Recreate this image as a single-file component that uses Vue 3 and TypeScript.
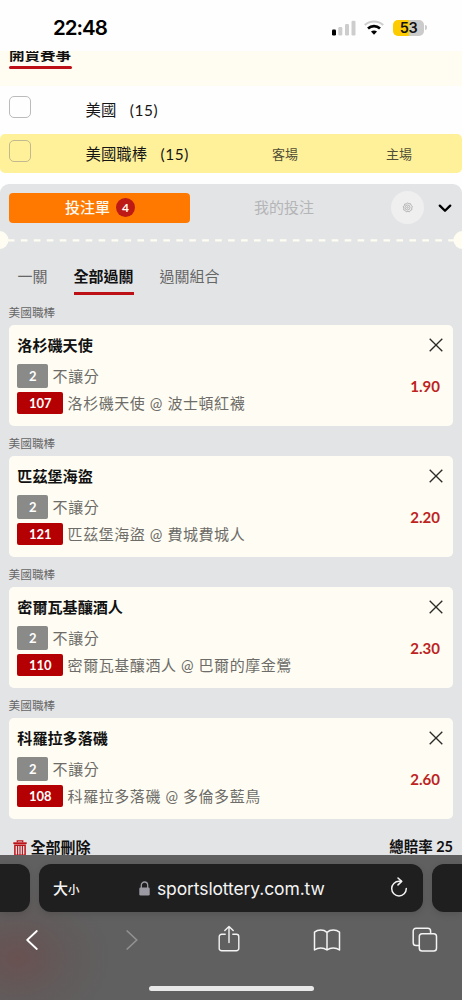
<script setup lang="ts">
interface Bet {
  id: string
  pick: string
  match: string
  odds: string
}

const bets: Bet[] = [
  { id: '107', pick: '洛杉磯天使', match: '洛杉磯天使 @ 波士頓紅襪', odds: '1.90' },
  { id: '121', pick: '匹茲堡海盜', match: '匹茲堡海盜 @ 費城費城人', odds: '2.20' },
  { id: '110', pick: '密爾瓦基釀酒人', match: '密爾瓦基釀酒人 @ 巴爾的摩金鶯', odds: '2.30' },
  { id: '108', pick: '科羅拉多落磯', match: '科羅拉多落磯 @ 多倫多藍鳥', odds: '2.60' },
]
</script>

<template>
  <div class="phone">
    <header class="status">
      <span class="time">22:48</span>
      <svg class="signal" width="24" height="16" viewBox="0 0 24 16">
        <rect x="0" y="9.5" width="4" height="6" rx="1.2" fill="#000" />
        <rect x="6.3" y="7" width="4" height="8.5" rx="1.2" fill="#cdcdcd" />
        <rect x="13" y="4" width="4" height="11.5" rx="1.2" fill="#cdcdcd" />
        <rect x="19.5" y="0.8" width="4" height="14.7" rx="1.2" fill="#cdcdcd" />
      </svg>
      <svg class="wifi" width="20" height="15" viewBox="0 0 20 15" fill="none">
        <path d="M.8 5C6 .3 14 .3 19.200 5" stroke="#cdcdcd" stroke-width="2.2" />
        <path d="M4 8.500C7.400 5.300 12.600 5.300 16 8.500" stroke="#000" stroke-width="2.6" />
        <path d="M7 11.6C8.7 10 11.3 10 13 11.6L10 14.8Z" fill="#000" />
      </svg>
      <div class="battery"><span>53</span></div>
      <i class="battery-tip"></i>
    </header>

    <main class="page">
      <div class="heading"><h2>開賣賽事</h2></div>
      <div class="league">
        <i class="check"></i>
        <span class="name">美國</span><span class="count">(15)</span>
      </div>
      <div class="league active">
        <i class="check"></i>
        <span class="name">美國職棒</span><span class="count">(15)</span>
        <span class="side away">客場</span><span class="side host">主場</span>
      </div>

      <section class="slip">
        <div class="slip-top">
          <div class="slip-btn">投注單<b>4</b></div>
          <div class="mine">我的投注</div>
          <div class="gear">
            <svg width="11" height="11" viewBox="0 0 22 22" fill="none" stroke="#a8a8a8" stroke-width="1.6" stroke-linejoin="round">
              <path d="M11 1.500l2.700 2 3.400-.1.900 3.300 2.700 2.100L19.400 12l.5 3.400-3.100 1.300-1.800 2.900-3.300-.8-3.200 1-2-2.800-3.200-1.200.4-3.400-1.600-3 2.600-2.200.8-3.300 3.400.1z" />
              <circle cx="11" cy="11" r="5" /><circle cx="11" cy="11" r="1.6" />
            </svg>
          </div>
          <svg class="chev" width="14" height="9" viewBox="0 0 14 9" fill="none" stroke="#000" stroke-width="2.3" stroke-linecap="round" stroke-linejoin="round">
            <path d="M1.8 1.6L7 6.8l5.2-5.2" />
          </svg>
        </div>
        <svg class="tear" width="462" height="20" viewBox="0 0 462 20">
          <path d="M-5 10.400H462" stroke="#fffdf2" stroke-width="2.3" stroke-dasharray="6.6 6.350" />
          <circle cx="-.5" cy="10" r="9" fill="#fffdf2" /><circle cx="462.5" cy="10" r="9" fill="#fffdf2" />
        </svg>
        <nav class="tabs">
          <span>一關</span><span class="on">全部過關</span><span>過關組合</span>
        </nav>

        <article v-for="bet in bets" :key="bet.id" class="bet">
          <div class="label">美國職棒</div>
          <div class="card">
            <div class="info">
              <h3>{{ bet.pick }}</h3>
              <div class="line"><span class="tag">2</span><span class="desc">不讓分</span></div>
              <div class="line second"><span class="tag red">{{ bet.id }}</span><span class="desc">{{ bet.match }}</span></div>
            </div>
            <div class="right">
              <svg width="14" height="14" viewBox="0 0 14 14" stroke="#2b2b28" stroke-width="1.35"><path d="M.7 .7L13.3 13.3M13.3 .7L.7 13.3" /></svg>
              <strong>{{ bet.odds }}</strong>
            </div>
          </div>
        </article>

        <footer class="totals">
          <svg width="14" height="17" viewBox="0 0 14 17" fill="none" stroke="#bd1218">
            <path d="M4.3 2.3V.9h5.4v1.4" stroke-width="1.3" />
            <path d="M.3 3.2h13.4" stroke-width="1.8" />
            <path d="M1.9 5.3h10.2v10H1.9z" stroke-width="1.5" />
            <path d="M4.6 6v9M7 6v9M9.4 6v9" stroke-width="1.1" />
          </svg>
          <span class="clear">全部刪除</span>
          <span class="sum">總賠率 25</span>
        </footer>
      </section>
    </main>

    <div class="browser">
      <div class="pills">
        <div class="pill left"></div>
        <div class="pill address">
          <span class="aa">大<small>小</small></span>
          <svg class="lock" width="11" height="15" viewBox="0 0 11 15">
            <path d="M2.3 7V4.2a3.2 3.2 0 0 1 6.4 0V7" fill="none" stroke="#9b9aa3" stroke-width="1.3" />
            <rect x=".3" y="6.4" width="10.4" height="8.2" rx="1.4" fill="#9b9aa3" />
          </svg>
          <span class="url">sportslottery.com.tw</span>
          <svg class="reload" width="18" height="20" viewBox="0 0 18 20" fill="none" stroke="#f2f2f2" stroke-width="1.5" stroke-linecap="round" stroke-linejoin="round">
            <path d="M11.1 4.3H9a7.3 7.3 0 1 0 7.3 7.3" /><path d="M8 1l3.7 3.4L8 7.9" />
          </svg>
        </div>
        <div class="pill right-edge"></div>
      </div>
      <div class="tools">
        <svg class="back" width="12" height="20" viewBox="0 0 12 20" fill="none" stroke="#fff" stroke-width="1.8" stroke-linecap="round" stroke-linejoin="round"><path d="M10.8 1L1.2 10l9.6 9" /></svg>
        <svg class="forward" width="12" height="20" viewBox="0 0 12 20" fill="none" stroke="#929292" stroke-width="1.7" stroke-linecap="round" stroke-linejoin="round"><path d="M1.2 1l9.6 9-9.6 9" /></svg>
        <svg class="share" width="22" height="28" viewBox="0 0 22 28" fill="none" stroke="#f4f4f4" stroke-width="1.4" stroke-linecap="round" stroke-linejoin="round">
          <path d="M7.2 9.3H3.6A2.4 2.4 0 0 0 1.2 11.7v11.7a2.4 2.4 0 0 0 2.4 2.4h14.8a2.4 2.4 0 0 0 2.4-2.4V11.7a2.4 2.4 0 0 0-2.4-2.4h-3.6" />
          <path d="M11 17.5V1.5M6.8 5.6L11 1.4l4.2 4.2" />
        </svg>
        <svg class="book" width="28" height="22" viewBox="0 0 28 22" fill="none" stroke="#f4f4f4" stroke-width="1.5" stroke-linejoin="round">
          <path d="M14 3.3C10.500 .4 5 .4 1.500 3.200V21C5 18.300 10.500 18.300 14 21C17.500 18.300 23 18.300 26.500 21V3.200C23 .4 17.500 .4 14 3.300V21" />
        </svg>
        <svg class="windows" width="26" height="26" viewBox="0 0 26 26" fill="none" stroke="#f4f4f4" stroke-width="1.5">
          <path d="M7.300 18.600H4A2.800 2.800 0 0 1 1.200 15.800V4A2.800 2.800 0 0 1 4 1.200H15.800A2.800 2.800 0 0 1 18.600 4V6.800" />
          <rect x="7.3" y="6.8" width="17.2" height="17.200" rx="2.8" />
        </svg>
      </div>
      <div class="home"></div>
    </div>
  </div>
</template>

<style>
body {
  margin: 0;
}
</style>

<style scoped>
* {
  box-sizing: border-box;
}
.phone {
  width: 462px;
  height: 1000px;
  overflow: hidden;
  display: flex;
  flex-direction: column;
  background: #fefefe;
  color: #111;
  font-family: Lato, 'Noto Sans CJK TC', sans-serif;
  font-size: 15px;
}
svg {
  display: block;
  flex: none;
}
h2,
h3 {
  margin: 0;
}
.status {
  height: 51px;
  flex: none;
  display: flex;
  align-items: center;
  padding: 4px 35px 0 53px;
}
.time {
  flex: 1;
  font: 600 20.5px/24px Inter, sans-serif;
  letter-spacing: -1px;
  color: #000;
}
.signal {
  margin-right: 8px;
}
.wifi {
  margin-right: 9px;
}
.battery {
  width: 31px;
  height: 16px;
  border-radius: 5px;
  background: linear-gradient(90deg, #fccc00 53%, #cbcbcb 53%);
  font: 600 14.500px/16.500px Inter, sans-serif;
  letter-spacing: -0.4px;
  text-align: center;
  color: #111;
}
.battery-tip {
  width: 2px;
  height: 5px;
  margin-left: 1px;
  border-radius: 0 2px 2px 0;
  background: #cbcbcb;
}
.page {
  height: 804px;
  flex: none;
  overflow: hidden;
}
.heading {
  height: 35px;
  margin-bottom: 1px;
  overflow: hidden;
  background: #fffcf2;
  padding-left: 9px;
}
.heading h2 {
  display: flow-root;
  position: relative;
  width: 63px;
  height: 22px;
  margin-top: -4px;
  font-size: 15.500px;
  line-height: 15px;
  font-weight: 700;
  white-space: nowrap;
}
.heading h2::after {
  content: '';
  display: block;
  height: 3px;
  margin-top: 4px;
  border-radius: 1.500px;
  background: #bd1016;
}
.league {
  height: 43px;
  display: flex;
  align-items: center;
  padding-left: 8.500px;
  font-size: 15.400px;
  line-height: 24px;
  color: #151515;
}
.league.active {
  height: 39px;
  margin-top: 4px;
  border-radius: 5px;
  background: #fff19a;
}
.check {
  width: 22px;
  height: 22px;
  margin-right: 55px;
  border: 1px solid #bbb;
  border-radius: 5px;
  align-self: flex-start;
  margin-top: 9px;
}
.active .check {
  margin-top: 5.500px;
  border-color: #c2b98e;
}
.count {
  margin-left: 13.500px;
  letter-spacing: 0.6px;
}
.name,
.count {
  margin-top: 3px;
}
.active .name,
.active .count {
  margin-top: 1px;
}
.side {
  font-size: 13px;
  color: #514d36;
}
.away {
  margin-left: 83px;
}
.host {
  margin-left: 88px;
}
.slip {
  margin-top: 11px;
  height: 680px;
  border-radius: 9px 9px 0 0;
  background: #e3e4e6;
}
.slip-top {
  height: 47px;
  display: flex;
  align-items: center;
  padding-left: 9px;
}
.slip-btn {
  width: 181px;
  height: 30px;
  display: flex;
  align-items: center;
  justify-content: center;
  gap: 6px;
  padding: 0 0 2px 1px;
  border-radius: 4px;
  background: #ff7900;
  color: #fffaf2;
  font-weight: 500;
}
.slip-btn b {
  width: 19px;
  height: 19px;
  margin-top: 2px;
  border-radius: 50%;
  background: #bd1915;
  font-size: 12px;
  line-height: 19px;
  text-align: center;
}
.mine {
  width: 60px;
  margin: -2px 0 0 64px;
  color: #b4b5b7;
}
.gear {
  width: 33px;
  height: 33px;
  margin-left: 77px;
  display: grid;
  place-items: center;
  border-radius: 50%;
  background: #efeff0;
}
.chev {
  margin-left: 14px;
  margin-top: 2px;
}
.tear {
  margin-top: -1px;
}
.tabs {
  height: 45px;
  display: flex;
  align-items: flex-start;
  padding: 13px 0 0 17.500px;
  gap: 26px;
  line-height: 26px;
  color: #666;
}
.tabs span {
  height: 32px;
}
.tabs .on {
  border-bottom: 3px solid #bd1016;
  color: #111;
  font-weight: 700;
}
.bet {
  height: 131px;
  padding: 5px 9px 0 8.500px;
}
.label {
  height: 25px;
  font-size: 11.700px;
  line-height: 24px;
  color: #666;
}
.card {
  height: 101px;
  display: flex;
  justify-content: space-between;
  border-radius: 5px;
  background: #fffdf3;
  padding: 8px 13px 0 8.800px;
}
h3 {
  height: 31px;
  font-size: 15.100px;
  line-height: 24px;
  font-weight: 700;
}
.line {
  display: flex;
  align-items: center;
  gap: 4.300px;
  height: 24px;
}
.line.second {
  height: 22px;
  margin-top: 4px;
}
.tag {
  width: 31px;
  height: 24px;
  border-radius: 2px;
  background: #8a8a88;
  color: #fff;
  font-size: 13px;
  line-height: 25px;
  font-weight: 700;
  text-align: center;
}
.tag.red {
  width: 46px;
  height: 22px;
  line-height: 22px;
  background: #b50003;
}
.desc {
  color: #6d6c68;
  line-height: 24px;
  letter-spacing: 0.570px;
}
.right {
  display: flex;
  flex-direction: column;
  align-items: flex-end;
  padding-top: 5px;
}
.right svg {
  margin-right: -2.500px;
}
.right strong {
  margin-top: 24px;
  line-height: 20px;
  color: #bd231f;
}
.totals {
  display: flex;
  align-items: center;
  height: 29px;
  margin-top: 13px;
  padding: 0 9px 0 12.500px;
  line-height: 24px;
  font-weight: 700;
}
.totals svg {
  margin-top: 3px;
}
.clear {
  flex: 1;
  margin-left: 4px;
}
.sum {
  font-size: 14.500px;
}
.browser {
  flex: 1;
  display: flex;
  flex-direction: column;
  background:
    radial-gradient(ellipse 95px 75px at 18px 103px, rgba(108, 76, 76, 0.75), rgba(100, 84, 84, 0.4) 55%, transparent),
    #606060;
}
.pills {
  display: flex;
  gap: 9px;
  padding-top: 9px;
}
.pill {
  height: 48px;
  background: #1f1f1f;
  box-shadow: 0 2px 7px rgba(0, 0, 0, 0.13);
}
.left {
  width: 30px;
  border-radius: 0 12px 12px 0;
}
.right-edge {
  width: 30px;
  border-radius: 12px 0 0 12px;
}
.address {
  width: 384px;
  border-radius: 12px;
  display: flex;
  align-items: center;
  padding: 2px 15px 0 14px;
  color: #f4f4f4;
}
.aa {
  width: 86px;
  margin-top: -4px;
  font-size: 15px;
  font-weight: 500;
}
.aa small {
  font-size: 11.500px;
}
.lock {
  margin-top: -2px;
}
.url {
  flex: 1;
  margin-left: 7px;
  font: 400 17.500px/24px Inter, sans-serif;
  letter-spacing: -0.120px;
}
.reload {
  margin-top: -5px;
}
.tools {
  height: 56px;
  display: flex;
  align-items: center;
  padding-left: 25.500px;
}
.forward {
  margin-left: 88.500px;
}
.share {
  margin: -2px 0 0 80px;
}
.book {
  margin-left: 73px;
}
.windows {
  margin-left: 71px;
}
.home {
  width: 165px;
  height: 5px;
  margin: 18px auto 0;
  border-radius: 3px;
  background: #e8e8e8;
}
</style>
